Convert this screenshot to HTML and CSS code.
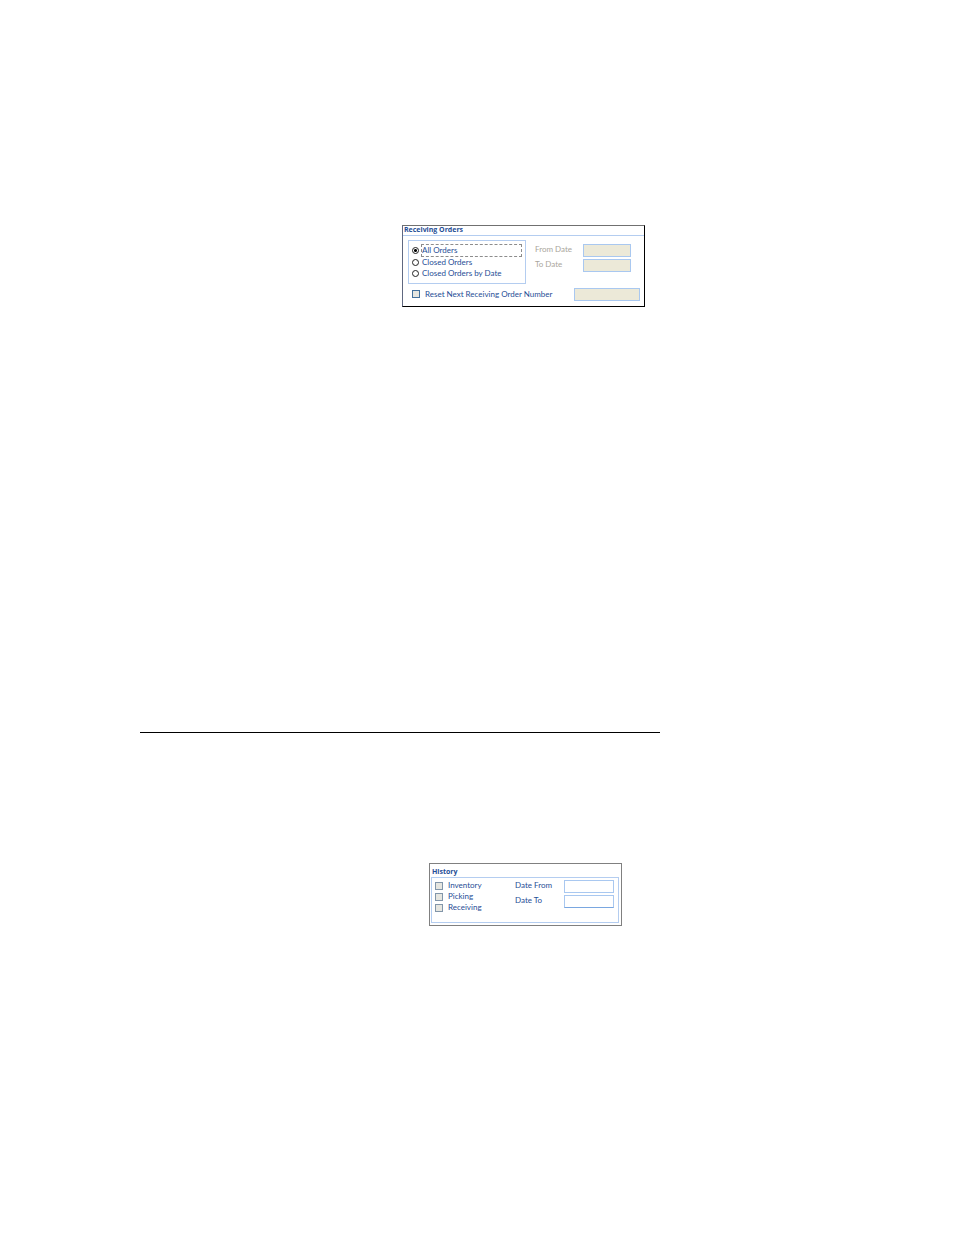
FILE: index.html
```html
<!DOCTYPE html>
<html lang="en">
<head>
	<meta charset="utf-8">
	<title>Receiving Orders and History</title>
	<link rel="stylesheet" href="styles.css">
</head>
<body>
	<main class="page">
		<form class="panel receiving">
			<h2>Receiving Orders</h2>
			<div class="receiving-top">
				<div class="box order-choice" role="radiogroup" aria-label="Receiving Orders">
					<label class="option focused"><input type="radio" name="orders" checked><span>All Orders</span></label>
					<label class="option"><input type="radio" name="orders"><span>Closed Orders</span></label>
					<label class="option"><input type="radio" name="orders"><span>Closed Orders by Date</span></label>
				</div>
				<div class="dates">
					<label for="fromDate">From Date</label>
					<input type="text" id="fromDate" disabled>
					<label for="toDate">To Date</label>
					<input type="text" id="toDate" disabled>
				</div>
			</div>
			<div class="reset-row">
				<label class="option"><input type="checkbox"><span>Reset Next Receiving Order Number</span></label>
				<input type="text" aria-label="Next receiving order number" disabled>
			</div>
		</form>

		<hr>

		<form class="panel history">
			<h2>History</h2>
			<div class="box history-box">
				<div class="history-choice">
					<label class="option"><input type="checkbox"><span>Inventory</span></label>
					<label class="option"><input type="checkbox"><span>Picking</span></label>
					<label class="option"><input type="checkbox"><span>Receiving</span></label>
				</div>
				<div class="dates">
					<label for="dateFrom">Date From</label>
					<input type="text" id="dateFrom">
					<label for="dateTo">Date To</label>
					<input type="text" id="dateTo">
				</div>
			</div>
		</form>
	</main>
</body>
</html>
```
FILE: styles.css
```css
* {
	box-sizing: border-box;
}
body {
	margin: 0;
	background: #fff;
	color: #1f4e96;
	font-family: Lato, "Open Sans", sans-serif;
	font-size: 8px;
	line-height: 11px;
}
.page {
	max-width: 660px;
	padding: 225px 0 300px 140px;
}
.panel {
	border: 1px solid #808080;
}
h2 {
	margin: 0;
	font-family: "Open Sans", sans-serif;
	font-size: 7px;
	line-height: 8px;
	font-weight: bold;
}
hr {
	margin: 425px 0 130px;
	border: 0;
	border-top: 1px solid #000;
}
.box {
	border: 1px solid #b4cdf0;
}

/* receiving orders */
.receiving {
	width: 243px;
	margin-left: 262px;
	border-color: #707070 #000 #000 #606880;
	padding-bottom: 5px;
}
.receiving h2 {
	padding: 0 0 1px 1px;
	border-bottom: 1px solid #b4cdf0;
}
.receiving-top {
	display: flex;
	padding: 4px 5px;
}
.order-choice {
	width: 118px;
	height: 44px;
	padding: 3px 4px 4px 3px;
}
.receiving .dates {
	margin: 4px 0 0 9px;
	grid-template-columns: 48px 48px;
	color: #aaa69c;
}
.reset-row {
	display: flex;
	justify-content: space-between;
	padding: 0 4px 0 9px;
}
.reset-row .option {
	gap: 5px;
	height: 12px;
}

/* history */
.history {
	width: 193px;
	margin-left: 289px;
	padding: 4px 2px 2px 1px;
}
.history h2 {
	padding: 0 0 1px 1px;
}
.history-box {
	display: flex;
	justify-content: space-between;
	height: 46px;
	padding: 2px 4px 0 3px;
}
.history .option {
	gap: 5px;
}
.history .dates {
	grid-template-columns: 49px 50px;
}

/* controls */
.dates {
	display: grid;
	grid-auto-rows: 13px;
	row-gap: 2px;
	align-content: start;
}
.option {
	display: flex;
	align-items: center;
	gap: 3px;
	height: 11px;
	white-space: nowrap;
}
.focused {
	height: 13px;
}
.focused span {
	flex: 1;
	outline: 1px dashed #8c8c8c;
}
input {
	margin: 0;
	font: inherit;
	color: inherit;
}
input[type="text"] {
	width: 100%;
	height: 13px;
	padding: 0 2px;
	border: 1px solid #a9c8f0;
	border-radius: 0;
	background: #fff;
}
input[type="text"]:disabled {
	background: #ece9d8;
}
.reset-row input[type="text"] {
	width: 66px;
}
#dateTo {
	border-bottom-color: #7aa7e0;
}
input[type="radio"] {
	appearance: none;
	width: 7px;
	height: 7px;
	border: 1px solid #222;
	border-radius: 50%;
	background: #fff;
}
input[type="radio"]:checked {
	background: radial-gradient(circle, #000 1px, #fff 2px);
}
input[type="checkbox"] {
	appearance: none;
	width: 8px;
	height: 8px;
	border: 1px solid #44719c;
	background: #e6e6e0;
}
.history input[type="checkbox"] {
	border-color: #8296aa;
}
```
